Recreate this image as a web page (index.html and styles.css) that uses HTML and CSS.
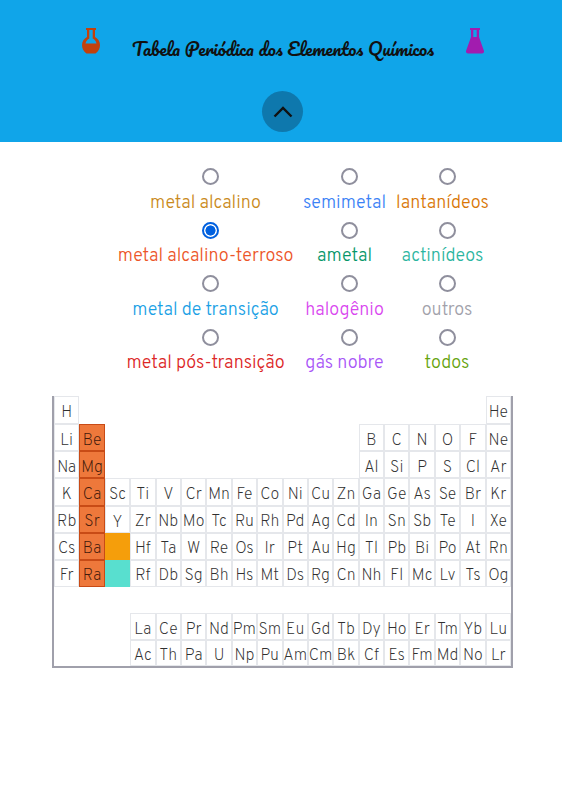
FILE: index.html
```
<!DOCTYPE html>
<html lang="pt-BR">
<head>
<meta charset="utf-8">
<title>Tabela Periódica dos Elementos Químicos</title>
<link rel="stylesheet" href="styles.css">
</head>
<body>
<header class="header">
  <div class="brand">
    <svg class="flask" viewBox="0 0 18 26" fill="#c2410c"><path fill-rule="evenodd" d="M4 0H14V2H13V9C16 10.500 18 13.500 18 17C18 20.500 16.500 23.500 13.500 25.500H4.500C1.500 23.500 0 20.500 0 17C0 13.500 2 10.500 5 9V2H4ZM7.300 2V10.500C5.500 11.500 4 13 3.500 15.500H14.500C14 13 12.500 11.500 10.700 10.500V2Z"/></svg>
    <h1 class="title">Tabela Periódica dos Elementos Químicos</h1>
    <svg class="flask" viewBox="0 0 18 26" fill="#a21caf"><path fill-rule="evenodd" d="M4 0H14V2H13V9L18 23Q18.300 25.500 16 25.500H2Q-.3 25.500 0 23L5 9V2H4ZM7.300 2V9H10.700V2Z"/></svg>
  </div>
  <button class="toggle" aria-label="Recolher"><svg width="20" height="12" viewBox="0 0 20 12" fill="none" stroke="#111" stroke-width="2.400"><path d="M1.500 10.500L10 2L18.500 10.500"/></svg></button>
</header>
<main>
  <form class="filters">
    <label class="filter alkali"><input type="radio" name="g"><span>metal alcalino</span></label>
    <label class="filter semi"><input type="radio" name="g"><span>semimetal</span></label>
    <label class="filter lant"><input type="radio" name="g"><span>lantanídeos</span></label>
    <label class="filter earth"><input type="radio" name="g" checked><span>metal alcalino-terroso</span></label>
    <label class="filter nonmetal"><input type="radio" name="g"><span>ametal</span></label>
    <label class="filter act"><input type="radio" name="g"><span>actinídeos</span></label>
    <label class="filter trans"><input type="radio" name="g"><span>metal de transição</span></label>
    <label class="filter halogen"><input type="radio" name="g"><span>halogênio</span></label>
    <label class="filter others"><input type="radio" name="g"><span>outros</span></label>
    <label class="filter post"><input type="radio" name="g"><span>metal pós-transição</span></label>
    <label class="filter noble"><input type="radio" name="g"><span>gás nobre</span></label>
    <label class="filter all"><input type="radio" name="g"><span>todos</span></label>
  </form>
  <div class="table" id="table"></div>
</main>
<script src="script.js"></script>
</body>
</html>
```
FILE: styles.css
```
* { box-sizing: border-box; }
body { margin: 0; background: #fff; font-family: Overpass, Roboto, sans-serif; }
.header { height: 142px; background: #10a5e9; display: flex; flex-direction: column; align-items: center; }
.brand { width: 402px; height: 91px; margin-left: 4px; padding-top: 28px; display: flex; justify-content: space-between; align-items: flex-start; }
.flask { width: 18px; height: 26px; flex: none; }
.title { margin: 9px 0 0; font: 400 17.800px/24px Pacifico, Lato, sans-serif; color: #111; white-space: nowrap; }
.toggle { width: 41px; height: 41px; margin-left: 3px; padding: 0; border: 0; border-radius: 50%; background: #0e78ad; display: flex; align-items: center; justify-content: center; }
.filters { display: grid; grid-template-columns: 175px 83px 93px; grid-auto-rows: 53.500px; column-gap: 10px; margin: 26px 0 0 118px; }
.filter { display: flex; flex-direction: column; align-items: center; font-size: 18px; font-weight: 300; line-height: 24px; white-space: nowrap; }
.filter input { appearance: none; flex: none; width: 17px; height: 17px; margin: 0 0 6.500px 9px; border: 2px solid #8f8f9d; border-radius: 50%; background: #fff; }
.filter input:checked { border-color: #0060df; background: radial-gradient(circle, #0060df 0 4.800px, #fff 5.300px); }
.alkali { color: #ca8a1b; }
.semi { color: #3b82f6; }
.lant { color: #d97706; }
.earth { color: #ec5528; }
.nonmetal { color: #059669; }
.act { color: #2bb5a0; }
.trans { color: #199fe5; }
.halogen { color: #d946ef; }
.others { color: #a1a1aa; }
.post { color: #dc2626; }
.noble { color: #a855f7; }
.all { color: #65a30d; }
.others span, .all span { margin-left: 9px; }
.table { width: 461px; height: 272px; margin: 14px 0 0 52px; border: solid #a0a0ab; border-width: 0 2px 2px; display: grid; grid-template-columns: repeat(18, 1fr); grid-template-rows: 28px 27px 27px 27.500px 27px 27px 27px 26.500px 27px 26px; }
.cell { min-width: 0; border: 1px solid #e5e7eb; display: flex; align-items: center; justify-content: center; padding-top: 6px; font-size: 16px; font-weight: 200; line-height: 18px; color: #303030; }
.cell:first-child, .cell:nth-child(18) { padding-top: 5px; }
.cell.low { padding-top: 7px; line-height: 16px; }
.cell.active { background: #ee783b; border-color: #c84b16; color: #421a0c; }
.cell.lanthanides { background: #f59e0b; border-color: #f59e0b; }
.cell.actinides { background: #58dfcf; border-color: #58dfcf; }
```
FILE: script.js
```
// One line per period; "." is an empty place, "*" and "#" stand for the two series.
const rows = [
  "H . . . . . . . . . . . . . . . . He",
  "Li Be . . . . . . . . . . B C N O F Ne",
  "Na Mg . . . . . . . . . . Al Si P S Cl Ar",
  "K Ca Sc Ti V Cr Mn Fe Co Ni Cu Zn Ga Ge As Se Br Kr",
  "Rb Sr Y Zr Nb Mo Tc Ru Rh Pd Ag Cd In Sn Sb Te I Xe",
  "Cs Ba * Hf Ta W Re Os Ir Pt Au Hg Tl Pb Bi Po At Rn",
  "Fr Ra # Rf Db Sg Bh Hs Mt Ds Rg Cn Nh Fl Mc Lv Ts Og",
  ". . . . . . . . . . . . . . . . . .",
  ". . . La Ce Pr Nd Pm Sm Eu Gd Tb Dy Ho Er Tm Yb Lu",
  ". . . Ac Th Pa U Np Pu Am Cm Bk Cf Es Fm Md No Lr"
];
const table = document.getElementById("table");
for (const row of rows) {
  row.split(" ").forEach((symbol, column) => {
    const cell = document.createElement("div");
    if (symbol !== ".") {
      cell.className = "cell";
      if (column === 1) cell.classList.add("active");
      if (column === 2) cell.classList.add("low");
      if (symbol === "*") cell.classList.add("lanthanides");
      else if (symbol === "#") cell.classList.add("actinides");
      else cell.textContent = symbol;
    }
    table.appendChild(cell);
  });
}
```
